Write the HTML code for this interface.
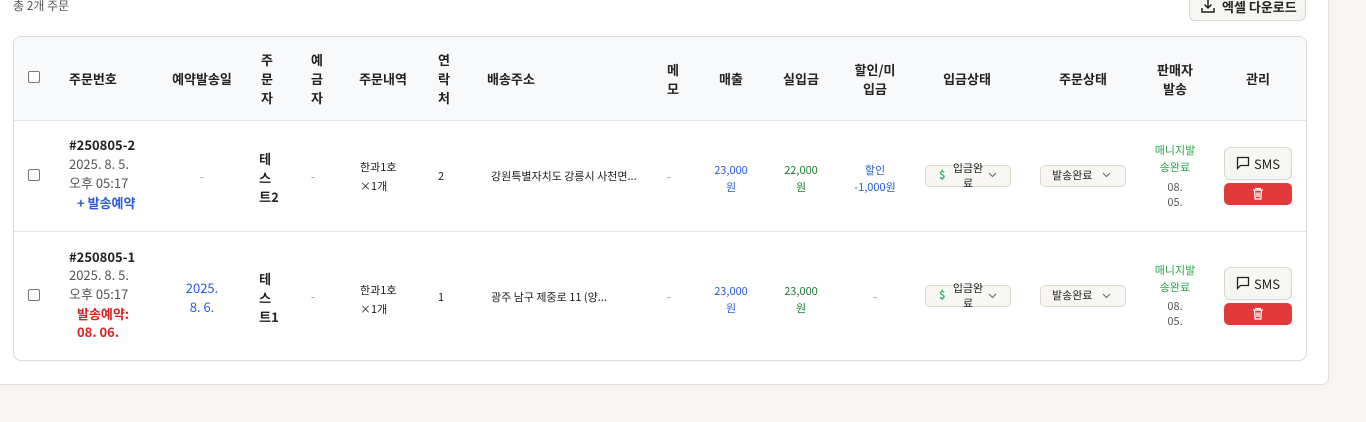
<!DOCTYPE html>
<html><head><meta charset="utf-8"><style>
*{box-sizing:border-box;margin:0;padding:0}
body{width:1366px;height:422px;background:#f7f6f2;position:relative;overflow:hidden;font-family:"Noto Sans CJK KR","Liberation Sans",sans-serif;color:#222}
.outer{position:absolute;left:-10px;top:-20px;width:1339px;height:405px;background:#fff;border:1px solid #e2e0d8;border-radius:0 0 7px 0}
.card{position:absolute;left:13px;top:36px;width:1294px;height:325px;border:1px solid #dddbd4;border-radius:8px;overflow:hidden;background:#fff}
.hd{position:absolute;left:0;top:0;width:100%;height:84px;background:#f8f9fb;border-bottom:1px solid #e4e4e4}
.ln{position:absolute;left:0;top:194px;width:100%;height:1px;background:#e6e6e6}
.a{position:absolute;line-height:19px;white-space:nowrap}
.c{position:absolute;line-height:19px;text-align:center;transform:translateX(-50%);white-space:nowrap}
.h{font-size:13px;font-weight:bold;color:#222}
.s{font-size:12px}
.cb{position:absolute;width:12px;height:12px;border:1px solid #777;border-radius:2px;background:#fff}
.dd{position:absolute;width:86px;height:22px;border:1px solid #dcd9cf;border-radius:5px;background:#f8f7f3;font-size:11px}
.btn{position:absolute;border:1px solid #d8d6ce;border-radius:6px;background:#f7f6f2}
.del{position:absolute;width:68px;height:22px;background:#e23a3a;border-radius:5px}
</style></head><body>
<div class="outer"></div>
<div class="a" style="left:13px;top:-4px;font-size:12px;color:#555">총 2개 주문</div>
<div class="btn" style="left:1189px;top:-10px;width:117px;height:31px"></div>
<svg style="position:absolute;left:1200px;top:-2px" width="16" height="16" viewBox="0 0 16 16" fill="none" stroke="#222" stroke-width="1.5"><path d="M8 1v9M4.5 6.5 8 10l3.5-3.5M2 10v4h12v-4"/></svg>
<div class="a" style="left:1222px;top:-3px;font-size:13px;font-weight:bold">엑셀 다운로드</div>
<div class="card">
<div class="hd"></div>
<div class="ln"></div>
</div>
<!-- header -->
<div class="cb" style="left:28px;top:71px"></div>
<div class="a h" style="left:69px;top:69px">주문번호</div>
<div class="c h" style="left:202px;top:69px">예약발송일</div>
<div class="c h" style="left:267px;top:50px">주<br>문<br>자</div>
<div class="c h" style="left:317px;top:50px">예<br>금<br>자</div>
<div class="c h" style="left:383px;top:69px">주문내역</div>
<div class="c h" style="left:444px;top:50px">연<br>락<br>처</div>
<div class="a h" style="left:487px;top:69px">배송주소</div>
<div class="c h" style="left:673px;top:60px">메<br>모</div>
<div class="c h" style="left:731px;top:69px">매출</div>
<div class="c h" style="left:801px;top:69px">실입금</div>
<div class="c h" style="left:875px;top:60px">할인/미<br>입금</div>
<div class="c h" style="left:967px;top:69px">입금상태</div>
<div class="c h" style="left:1083px;top:69px">주문상태</div>
<div class="c h" style="left:1175px;top:60px">판매자<br>발송</div>
<div class="c h" style="left:1258px;top:69px">관리</div>
<!-- row1 -->
<div class="cb" style="left:28px;top:169px"></div>
<div class="a" style="left:69px;top:135px;font-size:13px;font-weight:bold">#250805-2</div>
<div class="a" style="left:69px;top:154px;font-size:13px;color:#555">2025. 8. 5.<br>오후 05:17</div>
<div class="a" style="left:77px;top:193px;font-size:13px;font-weight:bold;color:#2a5bd7">+ 발송예약</div>
<div class="c s" style="left:202px;top:167px;color:#999">-</div>
<div class="c" style="left:269px;top:149px;font-size:13px;font-weight:bold;text-align:left">테<br>스<br>트2</div>
<div class="c s" style="left:313px;top:167px;color:#999">-</div>
<div class="a" style="left:360px;top:158px;font-size:11px">한과1호<br>×1개</div>
<div class="c" style="left:441px;top:167px;font-size:11px">2</div>
<div class="a" style="left:491px;top:167px;font-size:11px">강원특별자치도 강릉시 사천면...</div>
<div class="c s" style="left:669px;top:167px;color:#999">-</div>
<div class="c" style="left:731px;top:162px;font-size:11px;line-height:17px;color:#2a5bd7">23,000<br>원</div>
<div class="c" style="left:801px;top:162px;font-size:11px;line-height:17px;color:#1e7d32">22,000<br>원</div>
<div class="c" style="left:875px;top:162px;font-size:11px;line-height:17px;color:#2a5bd7">할인<br>-1,000원</div>
<div class="dd" style="left:925px;top:165px"></div>
<div class="a" style="left:939px;top:166px;font-size:11px;color:#3cb371;font-weight:bold">$</div>
<div class="c" style="left:968px;top:161px;font-size:11px;line-height:15px">입금완<br>료</div>
<svg style="position:absolute;left:988px;top:172px" width="9" height="6" viewBox="0 0 9 6" fill="none" stroke="#666"><path d="M1 1l3.5 3.5L8 1"/></svg>
<div class="dd" style="left:1040px;top:165px"></div>
<div class="a" style="left:1052px;top:166px;font-size:11px">발송완료</div>
<svg style="position:absolute;left:1102px;top:172px" width="9" height="6" viewBox="0 0 9 6" fill="none" stroke="#666"><path d="M1 1l3.5 3.5L8 1"/></svg>
<div class="c" style="left:1175px;top:142px;font-size:11px;line-height:17px;color:#2aa84a">매니지발<br>송완료</div>
<div class="c" style="left:1175px;top:180px;font-size:11px;line-height:15px;color:#555">08.<br>05.</div>
<div class="btn" style="left:1224px;top:147px;width:68px;height:33px"></div>
<svg style="position:absolute;left:1236px;top:156px" width="14" height="14" viewBox="0 0 14 14" fill="none" stroke="#222" stroke-width="1.3"><path d="M1.5 1.5h11v8h-8l-3 3z"/></svg>
<div class="a" style="left:1254px;top:154px;font-size:13px">SMS</div>
<div class="del" style="left:1224px;top:183px"></div>
<svg style="position:absolute;left:1252px;top:187px" width="12" height="13" viewBox="0 0 12 13" fill="none" stroke="#fff" stroke-width="1.3"><path d="M1 3h10M4 3V1.5h4V3M2.5 3l.7 9h5.6l.7-9M5 5.5v4.5M7 5.5v4.5"/></svg>
<!-- row2 -->
<div class="cb" style="left:28px;top:289px"></div>
<div class="a" style="left:69px;top:247px;font-size:13px;font-weight:bold">#250805-1</div>
<div class="a" style="left:69px;top:265px;font-size:13px;color:#555">2025. 8. 5.<br>오후 05:17</div>
<div class="a" style="left:77px;top:305px;font-size:13px;font-weight:bold;color:#e02020;line-height:18px">발송예약:<br>08. 06.</div>
<div class="c" style="left:202px;top:278px;font-size:13px;color:#2a5bd7">2025.<br>8. 6.</div>
<div class="c" style="left:269px;top:269px;font-size:13px;font-weight:bold;text-align:left">테<br>스<br>트1</div>
<div class="c s" style="left:313px;top:287px;color:#999">-</div>
<div class="a" style="left:360px;top:281px;font-size:11px">한과1호<br>×1개</div>
<div class="c" style="left:441px;top:288px;font-size:11px">1</div>
<div class="a" style="left:491px;top:288px;font-size:11px">광주 남구 제중로 11 (양...</div>
<div class="c s" style="left:669px;top:287px;color:#999">-</div>
<div class="c" style="left:731px;top:283px;font-size:11px;line-height:17px;color:#2a5bd7">23,000<br>원</div>
<div class="c" style="left:801px;top:283px;font-size:11px;line-height:17px;color:#1e7d32">23,000<br>원</div>
<div class="c s" style="left:875px;top:287px;color:#999">-</div>
<div class="dd" style="left:925px;top:285px"></div>
<div class="a" style="left:939px;top:286px;font-size:11px;color:#3cb371;font-weight:bold">$</div>
<div class="c" style="left:968px;top:281px;font-size:11px;line-height:15px">입금완<br>료</div>
<svg style="position:absolute;left:988px;top:293px" width="9" height="6" viewBox="0 0 9 6" fill="none" stroke="#666"><path d="M1 1l3.5 3.5L8 1"/></svg>
<div class="dd" style="left:1040px;top:285px"></div>
<div class="a" style="left:1052px;top:286px;font-size:11px">발송완료</div>
<svg style="position:absolute;left:1102px;top:293px" width="9" height="6" viewBox="0 0 9 6" fill="none" stroke="#666"><path d="M1 1l3.5 3.5L8 1"/></svg>
<div class="c" style="left:1175px;top:262px;font-size:11px;line-height:17px;color:#2aa84a">매니지발<br>송완료</div>
<div class="c" style="left:1175px;top:299px;font-size:11px;line-height:15px;color:#555">08.<br>05.</div>
<div class="btn" style="left:1224px;top:267px;width:68px;height:33px"></div>
<svg style="position:absolute;left:1236px;top:276px" width="14" height="14" viewBox="0 0 14 14" fill="none" stroke="#222" stroke-width="1.3"><path d="M1.5 1.5h11v8h-8l-3 3z"/></svg>
<div class="a" style="left:1254px;top:274px;font-size:13px">SMS</div>
<div class="del" style="left:1224px;top:303px"></div>
<svg style="position:absolute;left:1252px;top:307px" width="12" height="13" viewBox="0 0 12 13" fill="none" stroke="#fff" stroke-width="1.3"><path d="M1 3h10M4 3V1.5h4V3M2.5 3l.7 9h5.6l.7-9M5 5.5v4.5M7 5.5v4.5"/></svg>
</body></html>
